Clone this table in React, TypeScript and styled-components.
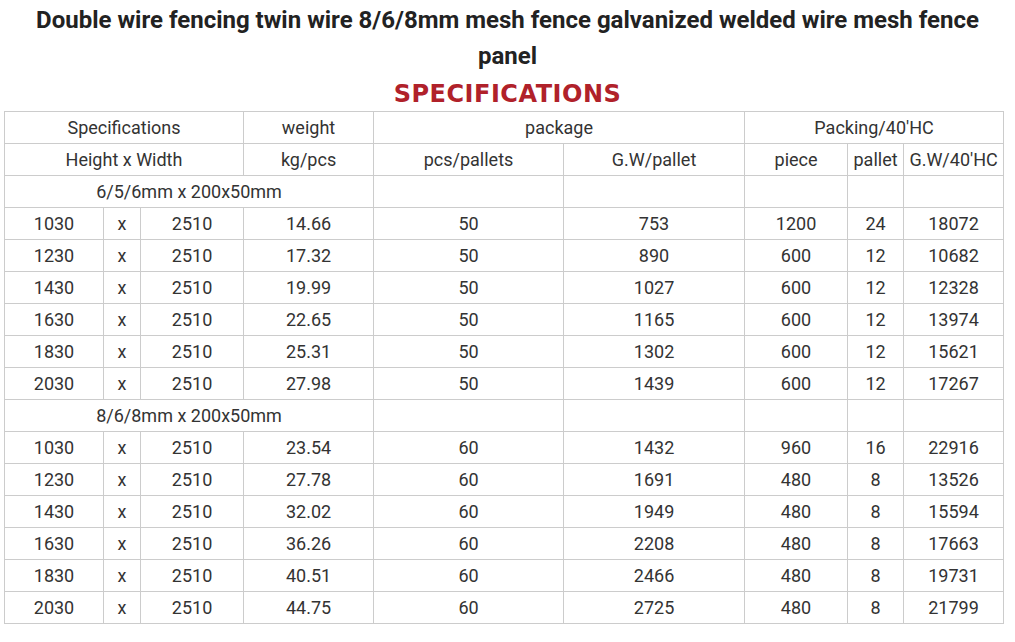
import React from "react";
import styled, { createGlobalStyle } from "styled-components";

const GlobalStyle = createGlobalStyle`
  html, body {
    margin: 0;
    padding: 0;
    background: #ffffff;
  }
`;

type Row = [string, string, string, string, string, string, string, string];

type Group = {
  label: string;
  rows: Row[];
};

const groups: Group[] = [
  {
    label: "6/5/6mm x 200x50mm",
    rows: [
      ["1030", "2510", "14.66", "50", "753", "1200", "24", "18072"],
      ["1230", "2510", "17.32", "50", "890", "600", "12", "10682"],
      ["1430", "2510", "19.99", "50", "1027", "600", "12", "12328"],
      ["1630", "2510", "22.65", "50", "1165", "600", "12", "13974"],
      ["1830", "2510", "25.31", "50", "1302", "600", "12", "15621"],
      ["2030", "2510", "27.98", "50", "1439", "600", "12", "17267"],
    ],
  },
  {
    label: "8/6/8mm x 200x50mm",
    rows: [
      ["1030", "2510", "23.54", "60", "1432", "960", "16", "22916"],
      ["1230", "2510", "27.78", "60", "1691", "480", "8", "13526"],
      ["1430", "2510", "32.02", "60", "1949", "480", "8", "15594"],
      ["1630", "2510", "36.26", "60", "2208", "480", "8", "17663"],
      ["1830", "2510", "40.51", "60", "2466", "480", "8", "19731"],
      ["2030", "2510", "44.75", "60", "2725", "480", "8", "21799"],
    ],
  },
];

const colWidths = [99, 37, 103, 130, 190, 181, 103, 56, 100];

export default function App() {
  return (
    <Page>
      <GlobalStyle />
      <Title>
        Double wire fencing twin wire 8/6/8mm mesh fence galvanized welded wire mesh fence panel
      </Title>
      <Subtitle>SPECIFICATIONS</Subtitle>
      <SpecTable>
        <colgroup>
          {colWidths.map((w, i) => (
            <col key={i} style={{ width: w }} />
          ))}
        </colgroup>
        <tbody>
          <tr>
            <Cell colSpan={3}>Specifications</Cell>
            <Cell>weight</Cell>
            <Cell colSpan={2}>package</Cell>
            <Cell colSpan={3}>Packing/40'HC</Cell>
          </tr>
          <tr>
            <Cell colSpan={3}>Height x Width</Cell>
            <Cell>kg/pcs</Cell>
            <Cell>pcs/pallets</Cell>
            <Cell>G.W/pallet</Cell>
            <Cell>piece</Cell>
            <Cell $tight>pallet</Cell>
            <Cell $tight>G.W/40'HC</Cell>
          </tr>
          {groups.map((g) => (
            <React.Fragment key={g.label}>
              <tr>
                <Cell colSpan={4}>{g.label}</Cell>
                <Cell />
                <Cell />
                <Cell />
                <Cell />
                <Cell />
              </tr>
              {g.rows.map((r, i) => (
                <tr key={i}>
                  <Cell>{r[0]}</Cell>
                  <Cell>x</Cell>
                  <Cell>{r[1]}</Cell>
                  <Cell>{r[2]}</Cell>
                  <Cell>{r[3]}</Cell>
                  <Cell>{r[4]}</Cell>
                  <Cell>{r[5]}</Cell>
                  <Cell>{r[6]}</Cell>
                  <Cell>{r[7]}</Cell>
                </tr>
              ))}
            </React.Fragment>
          ))}
        </tbody>
      </SpecTable>
    </Page>
  );
}

const Page = styled.div`
  width: 1015px;
  display: flex;
  flex-direction: column;
  align-items: center;
  font-family: Roboto, "Liberation Sans", sans-serif;
`;

const Title = styled.h1`
  margin: 2px 0 0;
  width: 970px;
  color: #222222;
  font-size: 24px;
  font-weight: 700;
  line-height: 36px;
  text-align: center;
`;

const Subtitle = styled.h2`
  margin: 0;
  padding-top: 3px;
  height: 34px;
  color: #b0212a;
  font-family: "DejaVu Sans", Roboto, sans-serif;
  font-size: 24px;
  font-weight: 700;
  line-height: 34px;
  letter-spacing: 0.5px;
  text-align: center;
`;

const SpecTable = styled.table`
  align-self: flex-start;
  margin-left: 4px;
  width: 999px;
  border-collapse: collapse;
  table-layout: fixed;
`;

const Cell = styled.td<{ $tight?: boolean }>`
  height: 31px;
  padding: ${(p) => (p.$tight ? "0 1px" : "0 4px")};
  border: 1px solid #cccccc;
  color: #333333;
  font-size: 18px;
  line-height: 20px;
  text-align: center;
  vertical-align: middle;
  white-space: nowrap;
  overflow: hidden;
`;
